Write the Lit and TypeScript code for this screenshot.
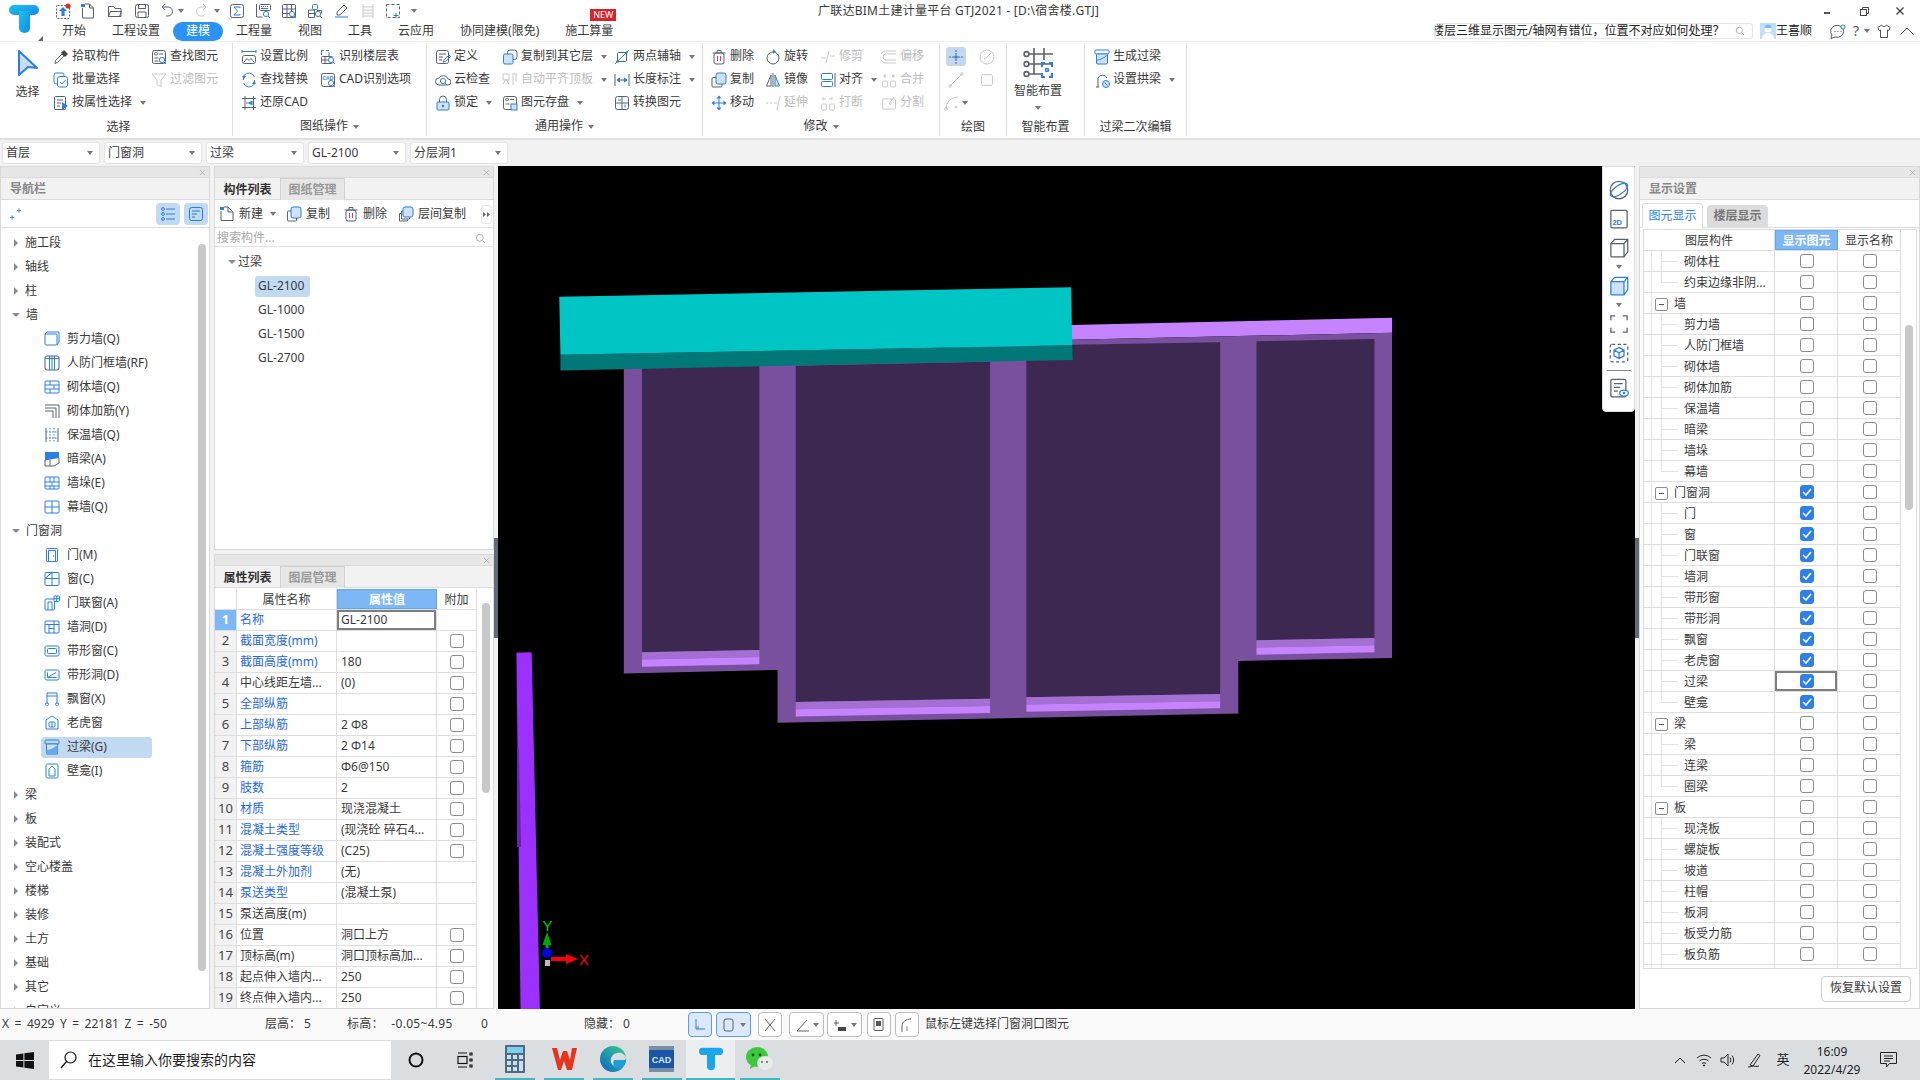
import { LitElement, html, css, nothing } from 'lit';
import { customElement } from 'lit/decorators.js';
import { unsafeHTML } from 'lit/directives/unsafe-html.js';

const B = '#2b7fe3', D = '#596170', G = '#c9c9c9', L = '#cfe2fa';
const p = (d: string, c = D, f = 'none') => `<path d="${d}" stroke="${c}" fill="${f}"/>`;
const R = (x: number, y: number, w: number, h: number, c = D, f = 'none', rx = 1) =>
  `<rect x="${x}" y="${y}" width="${w}" height="${h}" rx="${rx}" stroke="${c}" fill="${f}"/>`;
const mag = (x = 11, y = 11, c = B) => `<circle cx="${x}" cy="${y}" r="2.6" stroke="${c}" fill="#fff"/>` + p(`M${x + 2} ${y + 2}l2 2`, c);
const tri = (d: string, c = '#666') => `<path d="${d}" fill="${c}"/>`;

const I: Record<string, string> = {
  // quick access
  qaUp: `<rect x="1.5" y="2.5" width="13" height="13" rx="1" stroke="${D}" stroke-dasharray="2 1.4"/>` + tri('M8 4l4 4H9.6v5H6.4V8H4z', B) + `<circle cx="13" cy="3" r="2.6" fill="#e02a2a"/>`,
  qaNew: p('M2.5 5v10h11V5l-4-4H5', D) + p('M9.5 1v4h4', D) + `<rect x="1" y="1" width="4" height="3" fill="${B}"/>`,
  qaOpen: p('M1.5 13.5v-10h5l1.5 2h6v8z', D) + p('M1.5 13.5l2-5h11l-2 5', D),
  qaSave: R(1.5, 1.5, 13, 13, D, 'none', 2) + p('M4.500 2v3.5h7V2M4 14V9h8v5', D),
  qaUndo: p('M2 4h6a4.500 4.500 0 0 1 0 9H6', D) + p('M5 1L2 4l3 3', D),
  qaRedo: p('M10 4H5a4.500 4.500 0 0 0 0 9h3', G) + p('M7 1l3 3-3 3', G),
  qaSum: R(1.5, 1.5, 13, 13, D, 'none', 2) + p('M11 5V4H5l3.5 4L5 12h6v-1', B),
  qaCalc: p('M1.5 1v13h6', D) + R(4.5, 1.5, 11, 6, D) + p('M6 3.5h1M8 3.5h1M10 3.5h1M12 3.5h1M6 5.5h7', B) + mag(),
  qaGrid: R(1.5, 1.5, 13, 13, D) + p('M1.5 6h13M1.5 10.5h13M6 1.5v13M10.500 1.500v13', D) + mag(),
  qaBlock: R(5.5, 1.5, 5, 5, B) + p('M1.5 7v7.500h6V7zM1.500 10.500h6M10 7.500h4.500v3', D) + mag(),
  qaPen: p('M2 14h13', B) + p('M4 12l0-3 7-7 3 3-7 7z', D),
  qaLadder: p('M3 1v14M13 1v14M3 4h10M3 7h10M3 10h10M3 13h10', G),
  qaCorner: `<rect x="1.5" y="1.5" width="13" height="13" stroke="${D}" stroke-dasharray="3 2"/>` + p('M11 10v5M8.500 12.500h5', B),
  // ribbon
  pick: p('M2 14.5l.5-3L9 5l2 2-6.5 6.5z', D) + `<path d="M8 4l3-3 4 4-3 3z" fill="#444"/>`,
  batch: R(1, 1, 10, 11, B, '#fff', 2) + R(4.5, 4.5, 10, 10.5, B, '#fff', 2) + p('M7 10l2 2 3.5-4', B),
  attr: R(1.5, 1.5, 11, 13, D) + p('M4 5h6M4 8h4M4 11h3', D) + tri('M9 7l6 4-6 4z', B),
  find: R(1.5, 1.5, 13, 13, D, 'none', 2) + R(3.5, 3.5, 3, 2.5, D) + p('M8 5h4M3.500 9h4M3.500 12h4', D) + mag(),
  filter: p('M1 2h14l-5 6v6.500l-4-1.500V8z', G),
  scale: p('M1 2.500h14M1 1v3M15 1v3', B) + R(1.5, 6.5, 13, 8, D, 'none', 2) + p('M3 13l3-3.500 2 2 2-2 3 3.500', D),
  table: p('M1.500 1v5M1 1.500h3M6 1.500h3', B) + R(1.5, 7.5, 11, 7, D) + p('M5 7.500v7M1.500 11h8M9 3.500v4', D) + mag(),
  replace: p('M13.500 5A6 6 0 0 0 3 3.500', B) + p('M2.500 11a6 6 0 0 0 10.500 1.500', B) + p('M2.500 8a6 6 0 0 1 .5-4.500M13.500 8a6 6 0 0 1-.5 4.500', D) + tri('M1 4h4L3 7zM11 12h4l-2-3z', B),
  cad: R(1.5, 1.5, 13, 13, D, 'none', 2) + `<text x="2.5" y="7.5" font-size="5" font-weight="700" fill="${B}" font-family="Liberation Sans">CAD</text>` + mag(),
  restore: p('M4 1v14M12.500 1v14M1 3.500h14M1 12.500h14', D) + p('M11 6L8 8l3 2zM8 8H5', B, B),
  define: R(1.5, 1.5, 12, 13, D, 'none', 2) + p('M4 5h7M4 8h4M4 11h3', D) + p('M8 13l1-2 5-5 1.500 1.500-5 5z', B),
  cloud: p('M4 13a3.500 3.500 0 0 1 0-7 5 5 0 0 1 9 1 3 3 0 0 1 0 6z', D) + mag(8, 9),
  lock: `<rect x="2" y="7" width="12" height="8" rx="1" fill="${L}" stroke="${B}"/>` + p('M4.500 7V4.500a3.500 3.500 0 0 1 7 0V7', D) + `<circle cx="8" cy="11" r="1.2" fill="${B}"/>`,
  copyL: R(5.5, 1, 9.5, 9.5, D, '#fff', 2.5) + R(1.5, 5, 9.5, 10, B, L, 1.5),
  autoAlign: p('M1 2h6v6H1zM1 12l3-5 3 5M10 2h5M11 2v11M14 2v7', G),
  save: R(1.5, 1.5, 13, 13, D, 'none', 2) + R(3.5, 3.5, 3, 2, D) + p('M8 4.500h4M3.500 9h4', D) + `<rect x="9" y="9" width="6" height="6" fill="${L}" stroke="${B}"/>`,
  twoPt: R(3.5, 3.5, 9, 9, D) + p('M1 15L15 1', B) + `<circle cx="3.5" cy="12.5" r="1.3" fill="${B}"/><circle cx="12.5" cy="3.5" r="1.3" fill="${B}"/>`,
  dim: p('M1 2v12M15 2v12M3 8h10', D) + p('M3 8l2.500-2v4zM13 8l-2.500-2v4z', B, B),
  convert: R(1.5, 1.5, 13, 13, D, 'none', 2) + p('M8 1.500v13M1.500 8h13', D) + p('M4 5h3M11 9.500v3', B),
  del: R(3, 4, 10, 11, D, 'none', 2) + p('M1.500 4h13M6 4V1.500h4V4', D) + p('M6.500 7v5M9.500 7v5', '#e03a3a'),
  copy: R(5, 1, 10, 11, B, L, 2) + p('M5 5.500H2a1 1 0 0 0-1 1V14a1 1 0 0 0 1 1h8a1 1 0 0 0 1-1v-2', D),
  move: p('M8 2.500v11M2.500 8h11', B) + tri(`M8 .5l2.500 3h-5zM8 15.500l-2.500-3h5zM.5 8l3-2.500v5zM15.500 8l-3 2.500v-5z`, B),
  rotate: `<circle cx="8" cy="9" r="6" stroke="${D}"/>` + tri('M8 0v5l3-2.500z', B),
  mirror: p('M8 1v14', D) + p('M6 3L1.500 14H6z', D) + p('M10 3l4.500 11H10z', B, L),
  trim: p('M1 9h5M10 7h5M9 2l-3 12', G),
  offset: p('M15 2H5a5.500 5.500 0 0 0 0 12h10M15 5H5a3 3 0 0 0 0 6h10', G),
  align: R(1.5, 1.5, 11, 6, B, 'none', 1) + R(1.5, 9.5, 11, 5, B, 'none', 1) + p('M15 1v14', D),
  merge: p('M4 2v4M12 2v4M2 4h3M11 4h3', G) + R(1.5, 9, 5, 6, G) + R(9.5, 9, 5, 6, G),
  extend: p('M1 8h2M5 8h2M9 8h3M15 1l-3 14', G),
  breakup: p('M3 2v3M12 2v3M6 4H3M9 4h3', G) + R(1.5, 9, 5, 6, G) + R(9.5, 9, 5, 6, G),
  split: R(1.5, 4, 13, 10, G) + p('M8 9l5-7M9 10l2-3', G),
  aim: `<path d="M8 1v5M8 10v5M1 8h5M10 8h5" stroke="${D}" stroke-dasharray="2 1"/>` + `<circle cx="8" cy="8" r="1.8" fill="${B}"/>`,
  gauge: `<circle cx="8" cy="8" r="7" stroke="${G}"/>` + p('M8 8l4-4M5 10l3-2', G),
  line: p('M2 14L14 2', G) + `<circle cx="2" cy="14" r="1.3" stroke="${G}"/><circle cx="14" cy="2" r="1.3" stroke="${G}"/>`,
  square: R(2.5, 2.5, 11, 11, G, 'none', 2),
  arc: p('M2 14C2 7 7 2 14 2', G) + `<circle cx="2" cy="14" r="1.3" stroke="${G}"/><circle cx="12" cy="12" r="1" stroke="${G}"/>`,
  gen: R(1, 1, 14, 4, B) + R(2.5, 5, 11, 10, B, L) + p('M2.500 11c3 0 6-1 11-5', B),
  arch: p('M4 15V6a5 5 0 0 1 9 0', D) + p('M2 15h3', D) + `<circle cx="12" cy="12" r="3.5" fill="${L}" stroke="${B}"/>` + p('M10.500 10.500l3 3', B),
  // nav
  shear: R(1, 3, 12, 11, B) + p('M1 3l2-2h12v10l-2 3', B),
  rf: R(1, 1, 14, 14, D, 'none', 2) + p('M5.500 1v14M8 1v14M10.500 1v14M1 3.500h14', B),
  brick: R(1, 2, 14, 12, B) + p('M1 6h14M1 10h14M6 2v4M10 6v4M6 10v4', B),
  rebar: p('M1 2h14v13M1 5h11v10M1 8h8v7', D),
  insul: p('M2 1v14M14 1v14', D) + `<path d="M6 1v14M10 1v14M2 5h12M2 11h12" stroke="${B}" stroke-dasharray="1.5 1.5"/>`,
  beam: `<path d="M1 1h14v6L1 9.500z" fill="${B}"/>` + p('M1 9v6h9l5-3V7M6 9v6', D),
  pier: R(1, 2, 14, 12, B) + p('M1 7h14M1 11h14M6 2v5M10 2v5M8 7v4M6 11v3M10 11v3', B),
  curtain: R(1, 2, 14, 12, B) + p('M8 2v12M1 8h14', B),
  door: R(2.5, 1.5, 11, 13, B) + p('M4.500 14V3.500h7V14', B) + `<circle cx="9.5" cy="9" r=".7" fill="${B}"/>`,
  win: R(1, 1.5, 14, 13, B) + p('M8 1.500v13M1 7.500h14M1 7.500l7-6', B),
  dwin: R(1, 4, 9.5, 11, B) + R(10, 1, 5.5, 5.5, B, '#fff') + p('M12.700 1v5.500M10 3.700h5.500M4 15V7h4v8', B),
  hole: R(1, 2, 14, 12, B) + p('M1 5.500h14M5 5.500v8.500M10 5.500v8.500M5 9.500h5M10 2v3.500', B),
  strip: R(1, 3, 14, 10, B, 'none', 1.5) + R(3.5, 5.5, 9, 5, B),
  striph: R(1, 3, 14, 10, B, 'none', 1.5) + p('M3.500 10.500h9M3.500 5.500v5M3.500 10.500L12 5.500', B),
  bay: p('M3 13V2h10v11M3 5h10', B) + R(1.5, 12, 3, 2.5, B) + R(11.5, 12, 3, 2.5, B),
  dormer: p('M8 1l6 4v9H2V5z', B) + R(5, 7, 6, 5, B) + p('M8 7v5', B),
  lintel: R(1, 1, 14, 4, B) + `<path d="M2.500 5h11v10h-11z" fill="${L}" stroke="${B}"/><path d="M2.500 15V11c4-.5 7-2 11-5v9z" fill="#6ea9ee"/>`,
  niche: R(2, 1, 12, 14, B, 'none', 1.5) + p('M5 13V6l3-3 3 3v7z', B),
  spark: p('M1 12h5M3.500 9.500v5M9 4h5M11.500 1.500v5', B),
  listA: `<circle cx="3" cy="3" r="1.4" stroke="${B}"/><circle cx="3" cy="8" r="1.4" stroke="${B}"/><circle cx="3" cy="13" r="1.4" stroke="${B}"/>` + p('M6 3h9M6 8h9M6 13h9', B),
  listB: R(1.5, 1.5, 13, 13, B, 'none', 2) + p('M4 5h8M4 8h5M4 11h3', B),
  newdoc: p('M2 5v9.500h12V6l-5-5H5', D) + p('M9 1v5h5', D) + `<rect x="1" y="1" width="4" height="3" fill="${B}"/>`,
  copy2: R(5, 1, 10, 11, B, L, 2) + p('M5 5H2.500a1 1 0 0 0-1 1v8a1 1 0 0 0 1 1h7a1 1 0 0 0 1-1v-2', D),
  layers: R(5, 1, 10, 10, B, L, 2) + p('M5 5H3.500v8h8v-1.500M3 7.500H1.500V15h8v-1.500', D),
  search: `<circle cx="7" cy="7" r="5" stroke="#aaa" stroke-width="1.4"/>` + `<path d="M11 11l3.500 3.500" stroke="#aaa" stroke-width="1.4"/>`,
  close: `<path d="M2 2l12 12M14 2L2 14" stroke="#a8a8a8" stroke-width="1.6"/>`,
  // right toolbar
  orbit: `<ellipse cx="8" cy="8" rx="7" ry="7" stroke="${D}"/><ellipse cx="8" cy="8" rx="8" ry="3.5" stroke="${B}" transform="rotate(-35 8 8)"/>`,
  twoD: R(1.5, 1, 13, 14, D, 'none', 1) + `<text x="2.7" y="12.5" font-size="6" font-weight="700" fill="${B}" font-family="Liberation Sans">2D</text>`,
  cube: p('M1.500 4.500h10.500v10.500H2a.5.5 0 0 1-.5-.5zM1.500 4.500L4.500 1H15v10l-3 4M12 4.500L15 1', D),
  cubeB: `<path d="M1.500 4.500h10.500v10.500H2a.5.5 0 0 1-.5-.5z" fill="${L}"/>` + p('M1.500 4.500h10.500v10.500H2a.5.5 0 0 1-.5-.5zM1.500 4.500L4.500 1H15v10l-3 4M12 4.500L15 1', B),
  corners: p('M1.500 5V1.500H5M11 1.500h3.500V5M14.500 11v3.500H11M5 14.500H1.500V11', D, 'none'),
  dcube: `<rect x="1" y="1" width="14" height="14" rx="1.5" stroke="${D}" stroke-dasharray="2.5 2"/>` + p('M8 3.500l4 2.200v4.600L8 12.500l-4-2.200V5.700zM4 5.700l4 2.200 4-2.200M8 7.900v4.600', B),
  formEye: R(1.5, 1, 12, 14, D, 'none', 1) + p('M4 4.500h7M4 7.500h5M4 10.500h3', D) + `<ellipse cx="12" cy="12" rx="3.5" ry="2.4" stroke="${B}" fill="#fff"/><circle cx="12" cy="12" r="1" fill="${B}"/>`,
  // status
  sOrtho: p('M4 2v10h9M6 12v-3', B),
  sRect: R(2, 2, 9, 12, D, 'none', 2),
  sCross: p('M3 2l10 12M13 2L3 14', D),
  sAngle: p('M2 14L12 3M2 14h12', D),
  sPlus: p('M3 3v6M1 6h5', D) + `<rect x="5" y="10" width="8" height="4" fill="#444"/>`,
  sPrint: R(3, 1.5, 9, 12, D) + `<rect x="5" y="4" width="5" height="5" fill="#555"/>`,
  sArc: p('M3 15V9c0-4 4-7 9-7', D) + p('M8 14V9', '#888'),
};

const ic = (n: string, s = 16) => unsafeHTML(`<svg class="ic" width="${s}" height="${s}" viewBox="0 0 16 16" fill="none">${I[n] ?? ''}</svg>`);
const closeX = () => ic('close', 7);

type It = { i: string; t: string; c?: boolean; d?: boolean };
const rib: { w: number; pad: number; label: string; car?: boolean; cols: { w: number; items: It[] }[] }[] = [
  { w: 233, pad: 53, label: '选择', cols: [
    { w: 98, items: [{ i: 'pick', t: '拾取构件' }, { i: 'batch', t: '批量选择' }, { i: 'attr', t: '按属性选择', c: true }] },
    { w: 80, items: [{ i: 'find', t: '查找图元' }, { i: 'filter', t: '过滤图元', d: true }] },
  ] },
  { w: 194, pad: 8, label: '图纸操作', car: true, cols: [
    { w: 79, items: [{ i: 'scale', t: '设置比例' }, { i: 'replace', t: '查找替换' }, { i: 'restore', t: '还原CAD' }] },
    { w: 100, items: [{ i: 'table', t: '识别楼层表' }, { i: 'cad', t: 'CAD识别选项' }] },
  ] },
  { w: 276, pad: 8, label: '通用操作', car: true, cols: [
    { w: 67, items: [{ i: 'define', t: '定义' }, { i: 'cloud', t: '云检查' }, { i: 'lock', t: '锁定', c: true }] },
    { w: 112, items: [{ i: 'copyL', t: '复制到其它层', c: true }, { i: 'autoAlign', t: '自动平齐顶板', c: true, d: true }, { i: 'save', t: '图元存盘', c: true }] },
    { w: 88, items: [{ i: 'twoPt', t: '两点辅轴', c: true }, { i: 'dim', t: '长度标注', c: true }, { i: 'convert', t: '转换图元' }] },
  ] },
  { w: 237, pad: 8, label: '修改', car: true, cols: [
    { w: 54, items: [{ i: 'del', t: '删除' }, { i: 'copy', t: '复制' }, { i: 'move', t: '移动' }] },
    { w: 55, items: [{ i: 'rotate', t: '旋转' }, { i: 'mirror', t: '镜像' }, { i: 'extend', t: '延伸', d: true }] },
    { w: 61, items: [{ i: 'trim', t: '修剪', d: true }, { i: 'align', t: '对齐', c: true }, { i: 'breakup', t: '打断', d: true }] },
    { w: 54, items: [{ i: 'offset', t: '偏移', d: true }, { i: 'merge', t: '合并', d: true }, { i: 'split', t: '分割', d: true }] },
  ] },
];

const navRows: { t: string; i?: string; open?: boolean; sel?: boolean }[] = [
  { t: '施工段' }, { t: '轴线' }, { t: '柱' }, { t: '墙', open: true },
  { t: '剪力墙(Q)', i: 'shear' }, { t: '人防门框墙(RF)', i: 'rf' }, { t: '砌体墙(Q)', i: 'brick' }, { t: '砌体加筋(Y)', i: 'rebar' },
  { t: '保温墙(Q)', i: 'insul' }, { t: '暗梁(A)', i: 'beam' }, { t: '墙垛(E)', i: 'pier' }, { t: '幕墙(Q)', i: 'curtain' },
  { t: '门窗洞', open: true },
  { t: '门(M)', i: 'door' }, { t: '窗(C)', i: 'win' }, { t: '门联窗(A)', i: 'dwin' }, { t: '墙洞(D)', i: 'hole' },
  { t: '带形窗(C)', i: 'strip' }, { t: '带形洞(D)', i: 'striph' }, { t: '飘窗(X)', i: 'bay' }, { t: '老虎窗', i: 'dormer' },
  { t: '过梁(G)', i: 'lintel', sel: true }, { t: '壁龛(I)', i: 'niche' },
  { t: '梁' }, { t: '板' }, { t: '装配式' }, { t: '空心楼盖' }, { t: '楼梯' }, { t: '装修' }, { t: '土方' }, { t: '基础' }, { t: '其它' }, { t: '自定义' },
];

const ST = 'Φ';
const props: [string, string, boolean, boolean][] = [
  ['名称', 'GL-2100', true, false],
  ['截面宽度(mm)', '', true, true],
  ['截面高度(mm)', '180', true, true],
  ['中心线距左墙...', '(0)', false, true],
  ['全部纵筋', '', true, true],
  ['上部纵筋', `2 ${ST}8`, true, true],
  ['下部纵筋', `2 ${ST}14`, true, true],
  ['箍筋', `${ST}6@150`, true, true],
  ['肢数', '2', true, true],
  ['材质', '现浇混凝土', true, true],
  ['混凝土类型', '(现浇砼 碎石4...', true, true],
  ['混凝土强度等级', '(C25)', true, true],
  ['混凝土外加剂', '(无)', true, false],
  ['泵送类型', '(混凝土泵)', true, false],
  ['泵送高度(m)', '', false, false],
  ['位置', '洞口上方', false, true],
  ['顶标高(m)', '洞口顶标高加...', false, true],
  ['起点伸入墙内...', '250', false, true],
  ['终点伸入墙内...', '250', false, true],
];

// kind: g = group, c = child, l = last child
const disp: [string, string, boolean][] = [
  ['砌体柱', 'c', false], ['约束边缘非阴...', 'l', false], ['墙', 'g', false], ['剪力墙', 'c', false], ['人防门框墙', 'c', false], ['砌体墙', 'c', false],
  ['砌体加筋', 'c', false], ['保温墙', 'c', false], ['暗梁', 'c', false], ['墙垛', 'c', false], ['幕墙', 'l', false], ['门窗洞', 'g', true], ['门', 'c', true], ['窗', 'c', true],
  ['门联窗', 'c', true], ['墙洞', 'c', true], ['带形窗', 'c', true], ['带形洞', 'c', true], ['飘窗', 'c', true], ['老虎窗', 'c', true], ['过梁', 'c', true], ['壁龛', 'l', true],
  ['梁', 'g', false], ['梁', 'c', false], ['连梁', 'c', false], ['圈梁', 'l', false], ['板', 'g', false], ['现浇板', 'c', false], ['螺旋板', 'c', false], ['坡道', 'c', false],
  ['柱帽', 'c', false], ['板洞', 'c', false], ['板受力筋', 'c', false], ['板负筋', 'c', false], ['', 'c', false],
];

const qa: { i: string; w: number; c?: number }[] = [
  { i: 'qaUp', w: 25 }, { i: 'qaNew', w: 27 }, { i: 'qaOpen', w: 27 }, { i: 'qaSave', w: 26 }, { i: 'qaUndo', w: 18, c: 18 }, { i: 'qaRedo', w: 18, c: 15 },
  { i: 'qaSum', w: 26 }, { i: 'qaCalc', w: 26 }, { i: 'qaGrid', w: 26 }, { i: 'qaBlock', w: 26 }, { i: 'qaPen', w: 27 }, { i: 'qaLadder', w: 25 }, { i: 'qaCorner', w: 26 },
];

const statusBtns: { i: string; w: number; on?: boolean; c?: boolean; m: number }[] = [
  { i: 'sOrtho', w: 24, on: true, m: 0 }, { i: 'sRect', w: 35, on: true, c: true, m: 4 }, { i: 'sCross', w: 24, m: 7 }, { i: 'sAngle', w: 35, c: true, m: 7 },
  { i: 'sPlus', w: 35, c: true, m: 3 }, { i: 'sPrint', w: 24, m: 5 }, { i: 'sArc', w: 24, m: 4 },
];

@customElement('app-root')
export class AppRoot extends LitElement {
  static styles = css`
    :host { display: block; width: 1920px; height: 1080px; overflow: hidden; }
    * { box-sizing: border-box; }
    .app { width: 1920px; height: 1080px; display: flex; flex-direction: column; background: #f2f2f2; color: #3a3a3a;
      font: 12px/1.2 "Noto Sans", "Noto Sans CJK SC", sans-serif; overflow: hidden; }
    .ic { display: block; flex: none; }
    .car { display: inline-block; flex: none; width: 0; height: 0; border-left: 3px solid transparent; border-right: 3px solid transparent; border-top: 4px solid #777; }

    .head { height: 42px; display: flex; background: #fff; border-bottom: 1px solid #efefef; flex: none; }
    .logo { width: 49px; flex: none; display: block; }
    .headr { flex: 1; display: flex; flex-direction: column; }
    .r1 { height: 22px; display: flex; align-items: center; }
    .qa { width: 769px; display: flex; align-items: center; padding-left: 6px; flex: none; }
    .qac { display: flex; align-items: center; gap: 4px; flex: none; }
    .title { color: #3a3a3a; white-space: nowrap; width: 290px; flex: none; letter-spacing: .25px; }
    .wc { margin-left: auto; display: flex; align-items: center; height: 22px; padding-right: 16px; }
    .wmin { width: 6px; height: 2px; background: #555; margin-right: 30px; margin-top: 4px; }
    .wres { margin-right: 27px; }
    .r2 { height: 19px; display: flex; align-items: center; }
    .tab { height: 19px; padding: 0 13px; display: flex; align-items: center; position: relative; white-space: nowrap; color: #3a3a3a; }
    .tab.on { background: #2a93f5; color: #fff; border-radius: 10px; }
    .new { position: absolute; left: 38px; top: -13px; width: 26px; height: 12px; background: #d8232a; color: #fff; font-size: 9px; line-height: 12px; text-align: center; }
    .hr { margin-left: auto; display: flex; align-items: center; padding-right: 6px; }
    .sbox { width: 319px; height: 16px; border: 1px solid #e4e4e4; border-radius: 3px; display: flex; align-items: center; overflow: hidden; background: #fff; color: #222; }
    .sbox span { margin-left: -3px; white-space: nowrap; flex: 1; }
    .sbox svg { margin-right: 7px; }
    .ava { width: 16px; height: 16px; margin-left: 7px; flex: none; }
    .un { width: 54px; color: #222; }
    .chat { margin-right: 7px; }
    .qm { font-size: 14px; width: 8px; color: #555; margin-right: 3px; }
    .qmc { margin-right: 7px; }
    .chev { margin-left: 9px; }

    .ribbon { height: 98px; display: flex; background: #fff; border-bottom: 2px solid #dedede; flex: none; }
    .grp { flex: none; height: 93px; margin-top: 1px; border-right: 1px solid #dfdfdf; display: flex; flex-direction: column; }
    .gb { height: 74px; display: flex; padding-top: 2px; flex: none; }
    .gb.p9 { padding-left: 9px; }
    .col { flex: none; }
    .rbi { height: 23px; display: flex; align-items: center; gap: 3px; white-space: nowrap; color: #3a3a3a; }
    .rbi.d { color: #bdbdbd; }
    .rbi .car { margin-left: 5px; }
    .gl { flex: 1; display: flex; align-items: center; justify-content: center; gap: 5px; padding-top: 2px; color: #3a3a3a; }
    .gl.c { padding-top: 0; }
    .gl.first { padding-left: 5px; }
    .bigsel { width: 53px; display: flex; flex-direction: column; align-items: center; padding: 4px 0 0 2px; }
    .bigsel span { margin-top: 8px; }
    .draw { display: grid; grid-template-columns: 20px 20px; column-gap: 11px; padding-left: 6px; grid-auto-rows: 23px; justify-items: center; align-items: center; }
    .dsel { width: 20px; height: 19px; background: #c2d9f2; border-radius: 3px; display: flex; align-items: center; justify-content: center; }
    .darc { display: flex; align-items: center; gap: 2px; }
    .smart { width: 62px; display: flex; flex-direction: column; align-items: center; padding-top: 2px; }
    .smart span { margin: 5px 0 8px; white-space: nowrap; }
    .gw67 { width: 67px; } .gw78 { width: 78px; } .gw102 { width: 102px; }

    .combos { height: 26px; flex: none; display: flex; align-items: center; gap: 4px; padding: 0 0 0 2px; background: #f2f2f2; }
    .cb { width: 98px; height: 22px; background: #fff; border: 1px solid #e4e4e4; border-radius: 3px; display: flex; align-items: center; justify-content: space-between; padding: 0 6px 0 3px; }

    .main { flex: 1; min-height: 0; display: grid; grid-template-columns: 214px 284px 1137px 285px; background: #f2f2f2; }
    .pane { background: #fff; border: 1px solid #d9d9d9; display: flex; flex-direction: column; overflow: hidden; }
    .strip { height: 11px; background: #e6e6e6; border-bottom: 1px solid #dcdcdc; display: flex; align-items: center; justify-content: flex-end; padding-right: 3px; flex: none; }
    .phead { height: 22px; background: #f2f2f2; border-bottom: 1px solid #dcdcdc; display: flex; align-items: center; padding: 2px 0 0 9px; color: #888; font-weight: 700; flex: none; }
    .navp { width: 210px; height: 843px; }
    .navt { height: 28px; display: flex; align-items: center; border-bottom: 1px solid #dcdcdc; padding: 0 1px 0 8px; flex: none; }
    .navbtn { width: 24px; height: 22px; background: #c2d9f2; border-radius: 4px; display: flex; align-items: center; justify-content: center; }
    .navbtn.first { margin-left: auto; margin-right: 4px; }
    .navbody { flex: 1; display: flex; min-height: 0; overflow: hidden; }
    .navlist { flex: 1; padding: 3px 0 0 0; }
    .nr { height: 24px; display: flex; align-items: center; padding-left: 13px; color: #3a3a3a; white-space: nowrap; }
    .tr-r { width: 0; height: 0; border-top: 4px solid transparent; border-bottom: 4px solid transparent; border-left: 4px solid #8a8a8a; margin-right: 7px; flex: none; }
    .tr-d { width: 0; height: 0; border-left: 4px solid transparent; border-right: 4px solid transparent; border-top: 4px solid #8a8a8a; margin: 0 6px 0 -2px; flex: none; }
    .nc { height: 24px; display: flex; align-items: center; padding-left: 40px; }
    .nci { height: 21px; width: 111px; display: flex; align-items: center; gap: 7px; padding-left: 3px; border-radius: 3px; white-space: nowrap; }
    .nci.sel { background: #c2d9f2; }
    .navsb { width: 8px; height: 727px; background: #c8c8c8; border-radius: 4px; margin: 16px 3px 0 0; flex: none; }

    .midc { display: flex; flex-direction: column; gap: 4px; }
    .mid { width: 280px; }
    .m1 { height: 384px; }
    .m2 { height: 455px; }
    .tabs { height: 22px; display: flex; background: #f2f2f2; border-bottom: 1px solid #dcdcdc; flex: none; }
    .ptab { width: 65px; height: 22px; display: flex; align-items: center; justify-content: center; padding-top: 2px; }
    .ptab.on { font-weight: 700; color: #333; }
    .ptab.off { background: #e6e6e6; color: #999; font-weight: 700; border: 1px solid #d2d2d2; border-bottom: none; }
    .mtool { height: 28px; display: flex; align-items: center; border-bottom: 1px solid #e2e2e2; padding: 1px 0 0 4px; flex: none; }
    .mti { display: flex; align-items: center; gap: 4px; white-space: nowrap; }
    .mti .car { margin-left: 3px; }
    .mt-copy { margin-left: 10px; }
    .mt-del { margin-left: 13px; }
    .mt-lay { margin-left: 11px; }
    .more { margin-left: 15px; width: 11px; height: 19px; border: 1px solid #e6e6e6; border-radius: 3px; display: flex; align-items: center; justify-content: center; flex: none; }
    .msearch { height: 19px; display: flex; align-items: center; justify-content: space-between; border-bottom: 1px solid #e2e2e2; color: #aaa; padding: 2px 7px 0 2px; flex: none; }
    .mtree { padding-top: 3px; }
    .mroot { height: 24px; display: flex; align-items: center; padding-left: 13px; }
    .mroot .tr-d { margin: 0 2px 0 0; }
    .mi { height: 24px; display: flex; align-items: center; padding-left: 40px; }
    .mi span { padding: 0 3px; height: 21px; width: 55px; display: flex; align-items: center; border-radius: 3px; }
    .mi span.sel { background: #c2d9f2; }
    .ptbl { flex: 1; display: flex; overflow: hidden; padding-top: 1px; }
    .prows { width: 262px; flex: none; }
    .prow { display: grid; grid-template-columns: 22px 100px 100px 40px; height: 21px; border-bottom: 1px solid #dedede; }
    .prow > div { display: flex; align-items: center; border-right: 1px solid #dedede; white-space: nowrap; overflow: hidden; }
    .pn { justify-content: center; background: #f2f2f2; font-size: 13px; color: #444; }
    .pn.on { background: #7db7f5; color: #fff; font-weight: 700; }
    .pk { padding: 1px 0 0 3px; }
    .pk.bl { color: #2567e8; }
    .pv { padding: 1px 0 0 4px; }
    .foc { box-shadow: inset 0 0 0 2px #7f7f7f; }
    .pc { justify-content: center; }
    .hc { justify-content: center; padding-top: 2px; }
    .hc.on { background: #7db7f5; color: #fff; font-weight: 700; border: 1px solid #62a6ee; }
    .psb { width: 8px; height: 190px; background: #c8c8c8; border-radius: 4px; margin: 14px 0 0 5px; flex: none; }
    .chk { width: 14px; height: 14px; border: 1px solid #8c8c8c; border-radius: 3px; background: #fff; flex: none; display: block; }
    .chk.on { background: #2f80e6; border-color: #2f80e6; display: flex; align-items: center; justify-content: center; }

    .canvas { background: #000; position: relative; overflow: visible; }
    .canvas > svg { display: block; }
    .split { position: absolute; width: 4px; height: 100px; top: 372px; background: #5f6b75; }
    .split.l { left: -4px; }
    .split.r { right: -4px; }
    .rtool { position: absolute; right: 0; top: 0; width: 33px; height: 246px; background: #fff; border: 1px solid #e0e0e0; border-radius: 0 0 4px 4px; display: flex; flex-direction: column; align-items: center; padding-top: 13px; }
    .rtool .car { margin: 7px 0; }
    .rg { margin-bottom: 9px; }
    .rsep { width: 24px; height: 1px; background: #8a8a8a; margin: -2px 0 7px; }

    .rightc { padding-left: 4px; }
    .rp { width: 281px; height: 843px; }
    .rtabs { height: 28px; display: flex; align-items: flex-end; padding-left: 2px; gap: 4px; border-bottom: 1px solid #dcdcdc; flex: none; }
    .rtab { height: 24px; width: 61px; display: flex; align-items: center; justify-content: center; border-radius: 4px 4px 0 0; padding-top: 1px; }
    .rtab.on { color: #2f86ec; border: 1px solid #dcdcdc; border-bottom: 1px solid #fff; margin-bottom: -1px; height: 25px; background: #fff; }
    .rtab.off { background: #dcdcdc; color: #777; font-weight: 700; height: 22px; }
    .dtw { margin: 1px 2px 0 3px; height: 740px; border: 1px solid #dcdcdc; display: flex; overflow: hidden; flex: none; }
    .dcols { width: 257px; flex: none; }
    .drow { display: grid; grid-template-columns: 131px 63px 63px; height: 21px; border-bottom: 1px solid #dedede; }
    .drow > div { display: flex; align-items: center; border-right: 1px solid #dedede; white-space: nowrap; overflow: hidden; }
    .drow .pc { padding-left: 1px; }
    .dsb { width: 8px; height: 185px; background: #c8c8c8; border-radius: 4px; margin: 95px 0 0 4px; flex: none; }
    .dn { padding: 2px 0 0 40px; }
    .dn.g { padding-left: 11px;
      background: linear-gradient(#e2e2e2,#e2e2e2) 7px 0/1px 100% no-repeat; }
    .dn.c { background: linear-gradient(#e2e2e2,#e2e2e2) 7px 0/1px 100% no-repeat, linear-gradient(#e2e2e2,#e2e2e2) 17px 0/1px 100% no-repeat, linear-gradient(#e2e2e2,#e2e2e2) 17px 50%/17px 1px no-repeat; }
    .dn.l { background: linear-gradient(#e2e2e2,#e2e2e2) 7px 0/1px 100% no-repeat, linear-gradient(#e2e2e2,#e2e2e2) 17px 0/1px 50% no-repeat, linear-gradient(#e2e2e2,#e2e2e2) 17px 50%/17px 1px no-repeat; }
    .box { width: 13px; height: 13px; border: 1px solid #8c8c8c; border-radius: 2px; background: #fff; margin-right: 6px; display: flex; align-items: center; justify-content: center; flex: none; }
    .box i { display: block; width: 5px; height: 1px; background: #555; }
    .rf { flex: 1; display: flex; justify-content: flex-end; align-items: center; padding-right: 8px; }
    .rbtn { width: 90px; height: 26px; border: 1px solid #cfcfcf; border-radius: 4px; display: flex; align-items: center; justify-content: center; background: #fff; }

    .status { height: 31px; flex: none; background: #fafafa; display: flex; align-items: center; color: #3a3a3a; padding-left: 2px; }
    .sf { flex: none; white-space: nowrap; }
    .sf1 { width: 263px; word-spacing: 2.4px; }
    .sf2 { width: 82px; }
    .sf3 { width: 134px; word-spacing: 4px; letter-spacing: .3px; }
    .sf4 { width: 103px; }
    .sf5 { width: 104px; }
    .sb { height: 25px; border: 1px solid #bdbdbd; border-radius: 4px; display: flex; align-items: center; justify-content: center; gap: 2px; flex: none; background: #fff; }
    .sb.on { background: #dbe9fb; border-color: #5a9bee; }
    .stxt { margin-left: 6px; white-space: nowrap; }

    .task { height: 40px; flex: none; background: #dadee1; display: flex; color: #1e1e1e; }
    .tc { display: flex; align-items: center; justify-content: center; flex: none; height: 40px; }
    .w12 { width: 12px; } .w24 { width: 24px; } .w26 { width: 26px; font-size: 13px; } .w30 { width: 30px; } .w40 { width: 40px; } .w49 { width: 49px; } .w50 { width: 50px; }
    .tsearch { width: 342px; height: 38px; margin-top: 1px; background: #fff; display: flex; align-items: center; padding-left: 11px; gap: 11px; font-size: 14px; flex: none; }
    .tapp { width: 49px; height: 40px; display: flex; flex-direction: column; align-items: center; flex: none; }
    .tapp.act { background: #eceef0; }
    .tai { flex: 1; display: flex; align-items: center; justify-content: center; }
    .tul { width: 40px; height: 2px; background: #48b5c4; }
    .tapp.act .tul { width: 100%; }
    .tray { margin-left: auto; display: flex; }
    .clock { width: 72px; height: 40px; display: flex; flex-direction: column; align-items: center; justify-content: center; gap: 3px; line-height: 15px; }
  `;

  private colsOf(g: typeof rib[number]) {
    return g.cols.map(c => html`<div class="col" style="width:${c.w}px">
      ${c.items.map(it => html`<div class="rbi ${it.d ? 'd' : ''}">${ic(it.i)}<span>${it.t}</span>${it.c ? html`<i class="car"></i>` : nothing}</div>`)}
    </div>`);
  }

  private grp(g: typeof rib[number]) {
    return html`<div class="grp" style="width:${g.w}px">
      <div class="gb" style="padding-left:${g.pad}px">${this.colsOf(g)}</div>
      <div class="gl ${g.car ? 'c' : ''}">${g.label}${g.car ? html`<i class="car"></i>` : nothing}</div>
    </div>`;
  }

  private ribbon() {
    const first = rib[0];
    return html`<div class="ribbon">
      <div class="grp" style="width:${first.w}px">
        <div class="gb">
          <div class="bigsel">
            <svg class="ic" width="22" height="28" viewBox="0 0 22 28" fill="none"><path d="M2 2l18 17-9-1-9 8z" fill="#c9def8" stroke="#2b7fe3" stroke-width="2" stroke-linejoin="round"/></svg>
            <span>选择</span>
          </div>
          ${this.colsOf(first)}
        </div>
        <div class="gl first">${first.label}</div>
      </div>
      ${rib.slice(1).map(g => this.grp(g))}
      <div class="grp gw67">
        <div class="gb draw">
          <div class="dsel">${ic('aim')}</div>${ic('gauge')}
          ${ic('line')}${ic('square')}
          <div class="darc">${ic('arc')}<i class="car"></i></div>
        </div>
        <div class="gl">绘图</div>
      </div>
      <div class="grp gw78">
        <div class="gb">
          <div class="smart">
            <svg class="ic" width="30" height="32" viewBox="0 0 30 32" fill="none" stroke="#596170" stroke-width="1.6">
              <path d="M5 7h25M5 17h25M5 27h13M11 1v26M21 1v12"/>
              <circle cx="3.5" cy="7" r="2.4"/><circle cx="3.5" cy="17" r="2.4"/><circle cx="3.5" cy="27" r="2.4"/>
              <path d="M19 20v-4h3M26 16h3v4M29 26v4h-3M22 30h-3v-4" stroke="#2b7fe3" stroke-width="2"/>
              <circle cx="24" cy="23" r="1.5" stroke="#2b7fe3"/>
            </svg>
            <span>智能布置</span><i class="car"></i>
          </div>
        </div>
        <div class="gl">智能布置</div>
      </div>
      <div class="grp gw102">
        <div class="gb p9">
          <div class="col">
            <div class="rbi">${ic('gen')}<span>生成过梁</span></div>
            <div class="rbi">${ic('arch')}<span>设置拱梁</span><i class="car"></i></div>
          </div>
        </div>
        <div class="gl">过梁二次编辑</div>
      </div>
    </div>`;
  }

  private nav() {
    return html`<div class="pane navp">
      <div class="strip">${closeX()}</div>
      <div class="phead">导航栏</div>
      <div class="navt">${ic('spark', 14)}<div class="navbtn first">${ic('listA')}</div><div class="navbtn">${ic('listB')}</div></div>
      <div class="navbody">
        <div class="navlist">
          ${navRows.map(r => r.i
            ? html`<div class="nc"><div class="nci ${r.sel ? 'sel' : ''}">${ic(r.i)}<span>${r.t}</span></div></div>`
            : html`<div class="nr"><i class="${r.open ? 'tr-d' : 'tr-r'}"></i><span>${r.t}</span></div>`)}
        </div>
        <div class="navsb"></div>
      </div>
    </div>`;
  }

  private mid() {
    return html`<div class="midc">
      <div class="pane mid m1">
        <div class="strip">${closeX()}</div>
        <div class="tabs"><div class="ptab on">构件列表</div><div class="ptab off">图纸管理</div></div>
        <div class="mtool">
          <div class="mti">${ic('newdoc')}<span>新建</span><i class="car"></i></div>
          <div class="mti mt-copy">${ic('copy2')}<span>复制</span></div>
          <div class="mti mt-del">${ic('del')}<span>删除</span></div>
          <div class="mti mt-lay">${ic('layers')}<span>层间复制</span></div>
          <div class="more">${unsafeHTML(`<svg class="ic" width="7" height="5" viewBox="0 0 7 5" fill="#666"><path d="M0 0l3 2.500L0 5zM4 0l3 2.500L4 5z"/></svg>`)}</div>
        </div>
        <div class="msearch"><span>搜索构件...</span>${ic('search', 11)}</div>
        <div class="mtree">
          <div class="mroot"><i class="tr-d"></i><span>过梁</span></div>
          ${['GL-2100', 'GL-1000', 'GL-1500', 'GL-2700'].map((g, i) => html`<div class="mi"><span class="${i === 0 ? 'sel' : ''}">${g}</span></div>`)}
        </div>
      </div>
      <div class="pane mid m2">
        <div class="strip">${closeX()}</div>
        <div class="tabs"><div class="ptab on">属性列表</div><div class="ptab off">图层管理</div></div>
        <div class="ptbl">
          <div class="prows">
            <div class="prow"><div></div><div class="hc">属性名称</div><div class="hc on">属性值</div><div class="hc">附加</div></div>
            ${props.map((r, i) => html`<div class="prow">
              <div class="pn ${i === 0 ? 'on' : ''}">${i + 1}</div>
              <div class="pk ${r[2] ? 'bl' : ''}">${r[0]}</div>
              <div class="pv ${i === 0 ? 'foc' : ''}">${r[1]}</div>
              <div class="pc">${r[3] ? html`<i class="chk"></i>` : nothing}</div>
            </div>`)}
          </div>
          <div class="psb"></div>
        </div>
      </div>
    </div>`;
  }

  private scene() {
    const strips: number[][] = [
      [259, 459, 799, 794], [521, 852, 903, 896], [914, 1244, 893, 886], [1306, 1507, 774, 769],
    ];
    const poly = (pts: number[][], f: string) => `<polygon points="${pts.map(q => q.join(',')).join(' ')}" fill="${f}"/>`;
    let s = '';
    s += poly([[990, 115], [1537, 100], [1537, 131], [990, 146]], '#c583ff');
    s += poly([[228, 205], [990, 146], [1537, 131], [1537, 811], [1275, 817], [1275, 927], [490, 946], [490, 836], [228, 843]], '#78509e');
    s += poly([[259, 205], [459, 200], [459, 794], [259, 799]], '#3c2850');
    s += poly([[521, 200], [852, 192], [852, 896], [521, 903]], '#3c2850');
    s += poly([[914, 158], [1244, 151], [1244, 886], [914, 893]], '#3c2850');
    s += poly([[1306, 149], [1507, 144], [1507, 769], [1306, 774]], '#3c2850');
    for (const [a, b, ya, yb] of strips) {
      s += poly([[a, ya], [b, yb], [b, yb + 15], [a, ya + 15]], '#a46fd3');
      s += poly([[a, ya + 15], [b, yb + 15], [b, yb + 30], [a, ya + 30]], '#c583ff');
    }
    s += poly([[120, 177], [992, 157], [993, 188], [120, 210]], '#007878');
    s += poly([[118, 56], [990, 36], [992, 157], [120, 177]], '#00c5c5');
    s += poly([[45, 800], [71, 799], [85, 1545], [52, 1545]], '#9b30ff');
    s += poly([[46, 1000], [49, 1000], [53, 1206], [46, 1206]], '#6a22b0');
    return unsafeHTML(`<svg width="1137" height="843" viewBox="0 0 1137 843">
      <g transform="translate(-8 104) scale(.5869 .4785)">${s}</g>
      <path d="M49 766l4.500 13h-9z" fill="#00a800"/><rect x="47.5" y="778" width="3" height="5" fill="#00a800"/>
      <rect x="47" y="794" width="5" height="6" fill="#bbb"/>
      <path d="M53 791h15v-3l12 5-12 5v-3H53z" fill="#f00"/>
      <circle cx="49" cy="787" r="5" fill="#0000e0"/>
      <text x="44.5" y="765" font-family="Liberation Sans, sans-serif" font-size="15" fill="#00d000">Y</text>
      <text x="81" y="799" font-family="Liberation Sans, sans-serif" font-size="15" fill="#f00">X</text>
    </svg>`);
  }

  private canvas() {
    return html`<div class="canvas">
      ${this.scene()}
      <div class="split l"></div>
      <div class="split r"></div>
      <div class="rtool">
        <div class="rg">${ic('orbit', 20)}</div>
        <div class="rg">${ic('twoD', 20)}</div>
        ${ic('cube', 20)}<i class="car"></i>
        ${ic('cubeB', 20)}<i class="car"></i>
        <div class="rg">${ic('corners', 20)}</div>
        <div class="rg">${ic('dcube', 20)}</div>
        <div class="rsep"></div>
        ${ic('formEye', 20)}
      </div>
    </div>`;
  }

  private right() {
    return html`<div class="rightc">
      <div class="pane rp">
        <div class="strip">${closeX()}</div>
        <div class="phead">显示设置</div>
        <div class="rtabs"><div class="rtab on">图元显示</div><div class="rtab off">楼层显示</div></div>
        <div class="dtw">
          <div class="dcols">
            <div class="drow"><div class="hc">图层构件</div><div class="hc on">显示图元</div><div class="hc">显示名称</div></div>
            ${disp.map(r => html`<div class="drow">
              <div class="dn ${r[1]}">${r[1] === 'g' ? html`<span class="box"><i></i></span>` : nothing}${r[0]}</div>
              <div class="pc ${r[0] === '过梁' && r[1] === 'c' ? 'foc' : ''}">${r[2]
                ? html`<span class="chk on"><svg width="10" height="8" viewBox="0 0 10 8" fill="none"><path d="M1 4l3 3 5-6" stroke="#fff" stroke-width="1.6"/></svg></span>`
                : html`<i class="chk"></i>`}</div>
              <div class="pc"><i class="chk"></i></div>
            </div>`)}
          </div>
          <div class="dsb"></div>
        </div>
        <div class="rf"><div class="rbtn">恢复默认设置</div></div>
      </div>
    </div>`;
  }

  private task() {
    const apps: [string, boolean][] = [
      [`<svg width="20" height="28" viewBox="0 0 20 28"><rect width="20" height="28" rx="1" fill="#4e6a80"/><rect x="2" y="2" width="16" height="6" fill="#7fd0ea"/><g fill="#cfe0ea"><rect x="2" y="10" width="4" height="4"/><rect x="8" y="10" width="4" height="4"/><rect x="14" y="10" width="4" height="4"/><rect x="2" y="16" width="4" height="4"/><rect x="8" y="16" width="4" height="4"/><rect x="14" y="16" width="4" height="10"/><rect x="2" y="22" width="4" height="4"/><rect x="8" y="22" width="4" height="4"/></g></svg>`, false],
      [`<svg width="26" height="26" viewBox="0 0 26 26"><path d="M1 2h5l3 12 3-9h4l3 9 2-12h5l-5 22h-5l-3-9-3 9H7z" fill="#e8341c"/></svg>`, false],
      [`<svg width="26" height="26" viewBox="0 0 26 26"><defs><linearGradient id="e" x1="1" y1="0" x2="0" y2="1"><stop offset="0" stop-color="#36d08c"/><stop offset="1" stop-color="#0c63c4"/></linearGradient></defs><circle cx="13" cy="13" r="13" fill="url(#e)"/><path d="M26 12c-1-4-5-6-9-5-5 1-7 5-6 9 1 4 5 6 10 5" fill="#dadee1"/><path d="M14 14h12v2c-1 3-4 6-8 7-4-1-6-5-4-9z" fill="#1f9fd8"/></svg>`, false],
      [`<svg width="25" height="26" viewBox="0 0 25 26"><rect width="25" height="26" rx="2" fill="#1a56a8"/><rect y="0" width="25" height="4" fill="#7a8da6"/><rect y="22" width="25" height="4" fill="#7a8da6"/><text x="12.5" y="17" font-size="9" font-weight="700" text-anchor="middle" fill="#dfe9f6" font-family="Liberation Sans">CAD</text></svg>`, false],
      [`<svg width="24" height="28" viewBox="0 0 30 28"><rect x="0" y="0" width="30" height="9" rx="4.5" fill="#1ba6ec"/><path d="M10 6h10v17a5 5 0 0 1-10 0z" fill="#1ba6ec"/></svg>`, true],
      [`<svg width="27" height="26" viewBox="0 0 27 26"><ellipse cx="11" cy="11" rx="11" ry="10" fill="#3ec83e"/><path d="M5 18l-1 5 5-3z" fill="#3ec83e"/><ellipse cx="19" cy="17" rx="8" ry="7" fill="#e6ece8"/><circle cx="16" cy="16" r="1" fill="#666"/><circle cx="21" cy="16" r="1" fill="#666"/><circle cx="7" cy="9" r="1.4" fill="#175a17"/><circle cx="14" cy="9" r="1.4" fill="#175a17"/></svg>`, false],
    ];
    return html`<div class="task">
      <div class="tc w49">${unsafeHTML(`<svg width="18" height="17" viewBox="0 0 18 17" fill="#111"><path d="M0 2.400L7.400 1.400v6.500H0zM8.400 1.200L18 0v7.900H8.400zM0 8.900h7.400v6.600L0 14.500zM8.400 8.900H18V17l-9.600-1.300z"/></svg>`)}</div>
      <div class="tsearch">${unsafeHTML(`<svg width="17" height="18" viewBox="0 0 17 18" fill="none" stroke="#111" stroke-width="1.2"><circle cx="10.5" cy="6.5" r="5.5"/><path d="M6.500 10.500L1 17"/></svg>`)}<span>在这里输入你要搜索的内容</span></div>
      <div class="tc w49">${unsafeHTML(`<svg width="16" height="16" viewBox="0 0 16 16" fill="none" stroke="#111" stroke-width="2"><circle cx="8" cy="8" r="6.5"/></svg>`)}</div>
      <div class="tc w50">${unsafeHTML(`<svg width="16" height="16" viewBox="0 0 16 16" fill="none" stroke="#111" stroke-width="1.2"><path d="M1 1h9M1 15h9"/><rect x="1" y="4.5" width="9" height="7"/><path d="M13 1h2v2h-2zM13 7h2v2h-2zM13 13h2v2h-2z"/></svg>`)}</div>
      ${apps.map(a => html`<div class="tapp ${a[1] ? 'act' : ''}"><div class="tai">${unsafeHTML(a[0])}</div><div class="tul"></div></div>`)}
      <div class="tray">
        <div class="tc w24">${unsafeHTML(`<svg width="12" height="7" viewBox="0 0 12 7" fill="none" stroke="#111"><path d="M1 6l5-5 5 5"/></svg>`)}</div>
        <div class="tc w24">${unsafeHTML(`<svg width="16" height="14" viewBox="0 0 16 14" fill="none" stroke="#222"><path d="M1 5a10 10 0 0 1 14 0M3.500 8a6.500 6.500 0 0 1 9 0M6 10.500a3 3 0 0 1 4 0"/><circle cx="8" cy="12.5" r=".6" fill="#222"/></svg>`)}</div>
        <div class="tc w24">${unsafeHTML(`<svg width="16" height="14" viewBox="0 0 16 14" fill="none" stroke="#222"><path d="M1 5v4h3l4 4V1L4 5zM10 4.500a4 4 0 0 1 0 5M12 2.500a7 7 0 0 1 0 9"/></svg>`)}</div>
        <div class="tc w30">${unsafeHTML(`<svg width="16" height="16" viewBox="0 0 16 16" fill="none" stroke="#222"><path d="M3 13L11 2l2 1.500L6 14zM1 15c3 0 4-1 5-1s3 1 6 0"/></svg>`)}</div>
        <div class="tc w26">英</div>
        <div class="clock"><span>16:09</span><span>2022/4/29</span></div>
        <div class="tc w40">${unsafeHTML(`<svg width="17" height="16" viewBox="0 0 17 16" fill="none" stroke="#222"><path d="M.5.5h16v11H9.500l-3 3.500v-3.500h-6z"/><path d="M4 4h9M4 6.500h9M4 9h6"/></svg>`)}</div>
        <div class="tc w12"></div>
      </div>
    </div>`;
  }

  render() {
    return html`<div class="app" lang="zh-CN">
      <div class="head">
        ${unsafeHTML(`<svg class="logo" width="49" height="41" viewBox="0 0 49 41"><defs><linearGradient id="tg" x1="0" y1="0" x2="1" y2="1"><stop offset="0" stop-color="#18c6e8"/><stop offset="1" stop-color="#1a86ee"/></linearGradient></defs><rect x="9" y="5" width="30" height="10" rx="5" fill="url(#tg)"/><path d="M19 11h11v17a5.500 5 0 0 1-11 0z" fill="url(#tg)"/><path d="M43 36v5h-5z" fill="#666"/></svg>`)}
        <div class="headr">
          <div class="r1">
            <div class="qa">
              ${qa.map(q => html`<div class="qac" style="width:${q.w}px">${ic(q.i)}</div>${q.c ? html`<div class="qac" style="width:${q.c}px"><i class="car"></i></div>` : nothing}`)}
              <div class="qac"><i class="car"></i></div>
            </div>
            <div class="title">广联达BIM土建计量平台 GTJ2021 - [D:\\宿舍楼.GTJ]</div>
            <div class="wc">
              <div class="wmin"></div>
              ${unsafeHTML(`<svg class="ic wres" width="9" height="9" viewBox="0 0 9 9" fill="none" stroke="#444"><rect x=".5" y="2.5" width="6" height="6"/><path d="M2.500 2.500V.5h6v6h-2"/></svg>`)}
              ${unsafeHTML(`<svg class="ic" width="8" height="8" viewBox="0 0 8 8" fill="none" stroke="#333" stroke-width="1.1"><path d="M.5.5l7 7M7.500.5l-7 7"/></svg>`)}
            </div>
          </div>
          <div class="r2">
            ${[['开始'], ['工程设置'], ['建模', 1], ['工程量'], ['视图'], ['工具'], ['云应用'], ['协同建模(限免)']].map(t => html`<div class="tab ${t[1] ? 'on' : ''}">${t[0]}</div>`)}
            <div class="tab">施工算量<span class="new">NEW</span></div>
            <div class="hr">
              <div class="sbox"><span>楼层三维显示图元/轴网有错位，位置不对应如何处理？</span>${ic('search', 10)}</div>
              ${unsafeHTML(`<svg class="ava" viewBox="0 0 16 16"><rect width="16" height="16" fill="#bfe0fb"/><circle cx="8" cy="6" r="3.4" fill="#fff"/><path d="M2 16c0-4 3-6 6-6s6 2 6 6z" fill="#fff"/><path d="M4.500 5a3.500 3.500 0 0 1 7 0z" fill="#7cc0f5"/></svg>`)}
              <span class="un">王喜顺</span>
              ${unsafeHTML(`<svg class="ic chat" width="16" height="15" viewBox="0 0 16 15" fill="none" stroke="#555"><path d="M2 11A6.500 6 0 1 1 5 13l-4 1.500z"/><path d="M4.500 7.500h1M7.500 7.500h1M10.500 7.500h1"/><circle cx="13" cy="3" r="2" fill="#fff" stroke="#2b7fe3"/></svg>`)}
              <span class="qm">?</span><i class="car qmc"></i>
              ${unsafeHTML(`<svg class="ic" width="14" height="14" viewBox="0 0 14 14" fill="none" stroke="#555"><path d="M4.500 1L.8 3.500l1.400 3L3.500 6v7.500h7V6l1.300.5 1.400-3L9.500 1C9 3 5 3 4.500 1z"/></svg>`)}
              ${unsafeHTML(`<svg class="ic chev" width="14" height="8" viewBox="0 0 14 8" fill="none" stroke="#444"><path d="M.5 7.500L7 1l6.500 6.500"/></svg>`)}
            </div>
          </div>
        </div>
      </div>
      ${this.ribbon()}
      <div class="combos">${['首层', '门窗洞', '过梁', 'GL-2100', '分层洞1'].map(t => html`<div class="cb"><span>${t}</span><i class="car"></i></div>`)}</div>
      <div class="main">${this.nav()}${this.mid()}${this.canvas()}${this.right()}</div>
      <div class="status">
        <span class="sf sf1">X = 4929 Y = 22181 Z = -50</span>
        <span class="sf sf2">层高： 5</span>
        <span class="sf sf3">标高： -0.05~4.95</span>
        <span class="sf sf4">0</span>
        <span class="sf sf5">隐藏： 0</span>
        ${statusBtns.map(b => html`<div class="sb ${b.on ? 'on' : ''}" style="width:${b.w}px;margin-left:${b.m}px">${ic(b.i)}${b.c ? html`<i class="car"></i>` : nothing}</div>`)}
        <span class="stxt">鼠标左键选择门窗洞口图元</span>
      </div>
      ${this.task()}
    </div>`;
  }
}
